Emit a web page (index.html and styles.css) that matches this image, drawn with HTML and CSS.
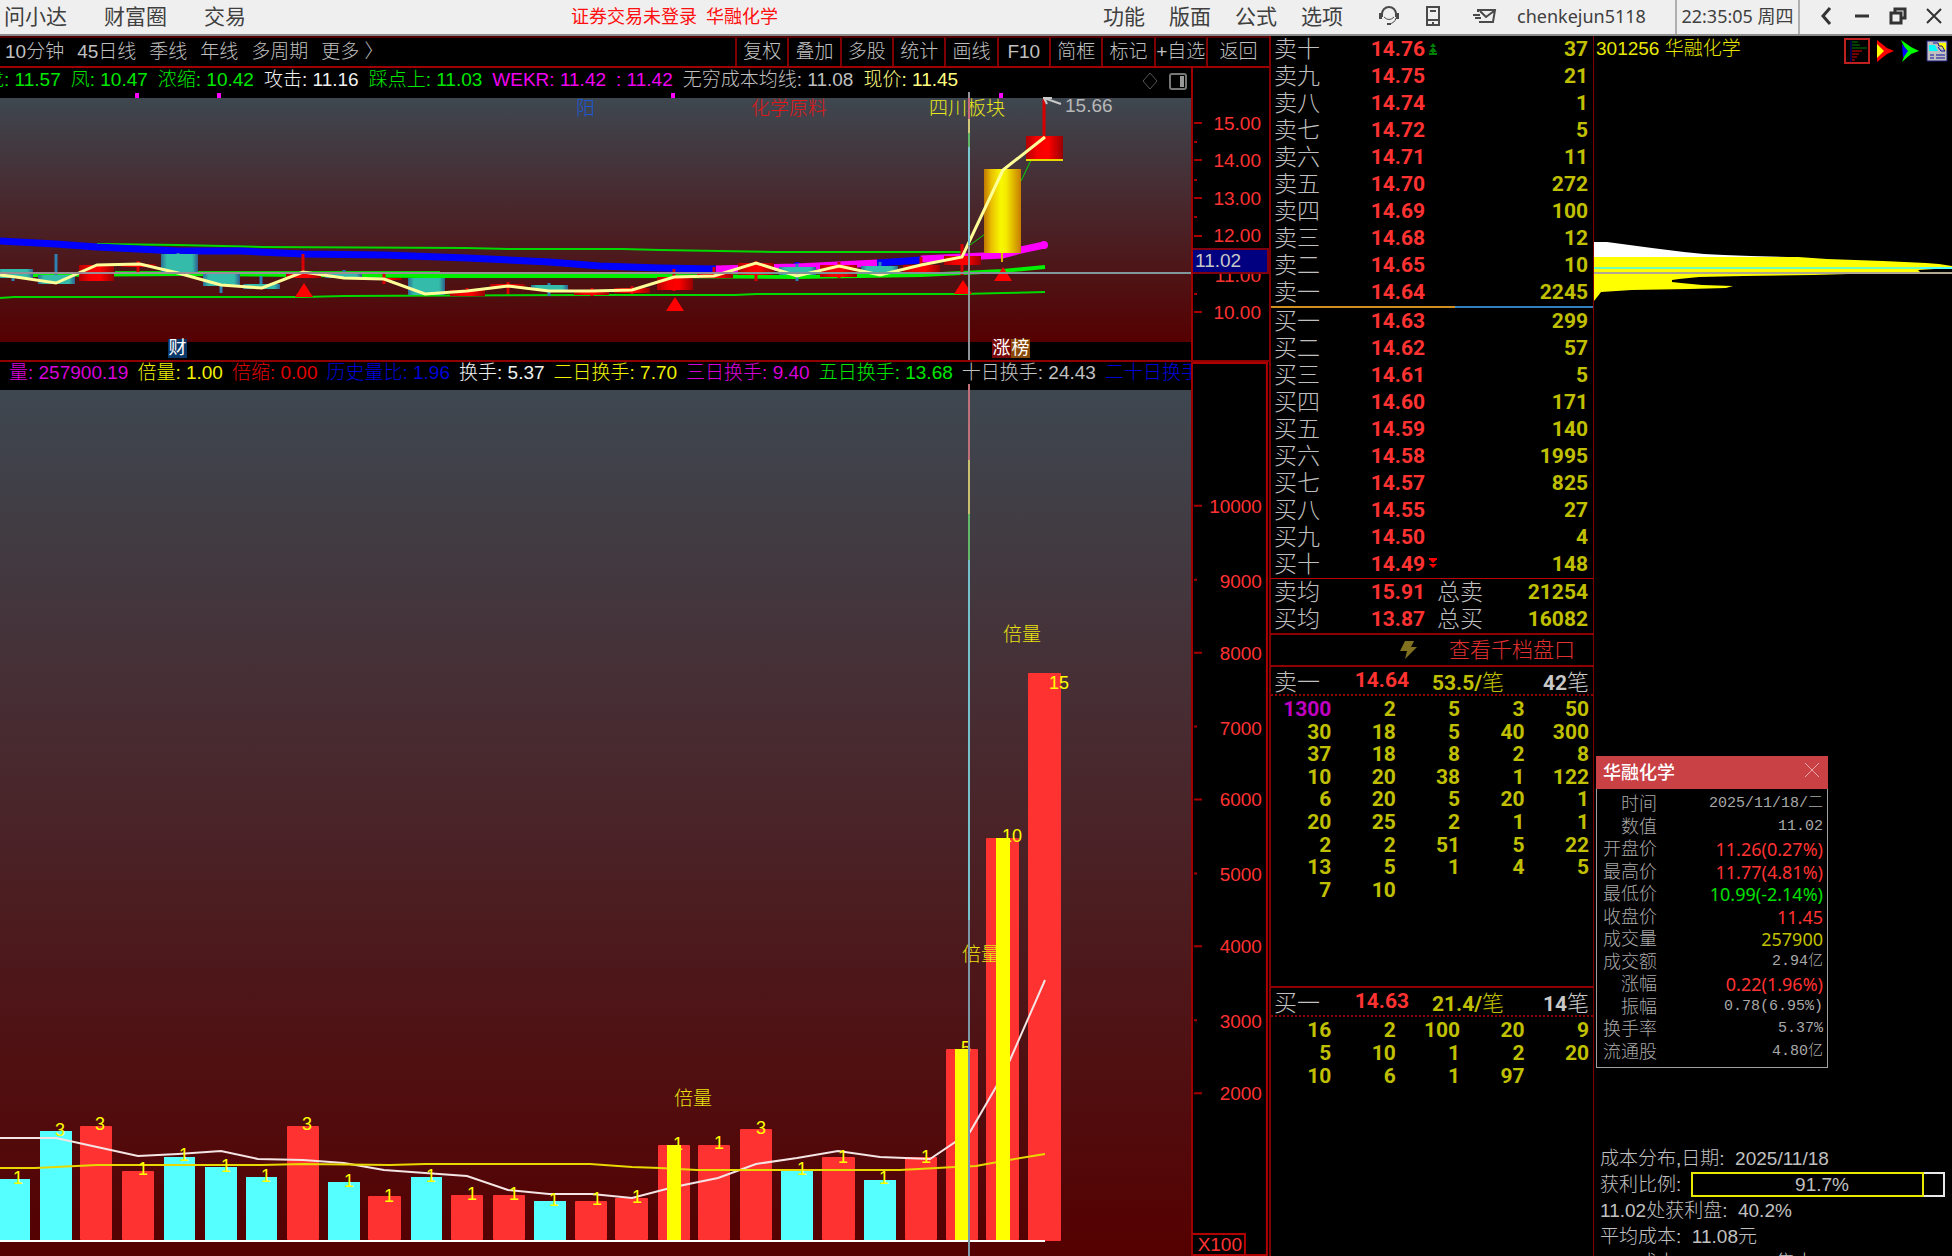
FILE: index.html
```html
<!DOCTYPE html>
<html lang="zh-CN">
<head>
<meta charset="utf-8">
<title>华融化学 301256</title>
<link rel="stylesheet" href="styles.css">
</head>
<body>
<header class="topbar">
  <nav class="menu menu-left">
    <button>问小达</button><button>财富圈</button><button>交易</button>
  </nav>
  <div class="login-state"><a href="#login">证券交易未登录</a><a href="#stock">华融化学</a></div>
  <div class="topbar-right">
    <nav class="menu menu-right">
      <button>功能</button><button>版面</button><button>公式</button><button>选项</button>
    </nav>
    <div class="tools">
      <button aria-label="客服"><svg width="22" height="20" viewBox="0 0 22 20"><path d="M4 11V8a7 7 0 0 1 14 0v3" fill="none" stroke="#4a4a4a" stroke-width="2"/><path d="M1 7h3v6H1zM18 7h3v6h-3z" fill="#4a4a4a"/><path d="M18 12q-1 5-7 6M6 11q5 5 10 0" fill="none" stroke="#4a4a4a" stroke-width="1"/><path d="M9 17h4v2H9z" fill="#4a4a4a"/></svg></button>
      <button aria-label="手机"><svg width="14" height="20" viewBox="0 0 14 20"><path d="M1 1h12v18H1zM4 5h6M1 14h12" fill="none" stroke="#4a4a4a" stroke-width="2"/><path d="M6 16h2v2H6z" fill="#4a4a4a"/></svg></button>
      <button class="tool-mail" aria-label="消息"><svg width="24" height="16" viewBox="0 0 24 16"><path d="M5 4V2h17l-2 12H6M7 3l6 6 8-6M0 7h7M2 10h6" fill="none" stroke="#4a4a4a" stroke-width="2"/></svg></button>
    </div>
    <span class="user">chenkejun5118</span>
    <time class="clock">22:35:05 周四</time>
    <div class="window-buttons">
      <button aria-label="后退"><svg width="12" height="18" viewBox="0 0 12 18"><path d="M10 1L3 9l7 8" fill="none" stroke="#333" stroke-width="3"/></svg></button>
      <button aria-label="最小化"><svg width="14" height="18" viewBox="0 0 14 18"><path d="M0 9h14" stroke="#333" stroke-width="3"/></svg></button>
      <button aria-label="还原"><svg width="18" height="18" viewBox="0 0 18 18"><path d="M6 6V2h10v9h-4M2 6h10v10H2z" fill="none" stroke="#333" stroke-width="3"/></svg></button>
      <button aria-label="关闭"><svg width="16" height="16" viewBox="0 0 16 16"><path d="M1 1l14 14M15 1L1 15" stroke="#333" stroke-width="2"/></svg></button>
    </div>
  </div>
</header>

<main class="workspace">
  <section class="charts">
    <div class="toolbar">
      <div class="periods">
        <button>10分钟</button><button>45日线</button><button>季线</button><button>年线</button><button>多周期</button><button>更多 〉</button>
      </div>
      <div class="actions">
        <button>复权</button><button>叠加</button><button>多股</button><button>统计</button><button>画线</button><button>F10</button><button>简框</button><button>标记</button><button>+自选</button><button>返回</button>
      </div>
    </div>

    <div class="price-row">
      <div class="pane">
        <div class="legend legend-price">
          <span class="green">龙: 11.57</span><span class="green">凤: 10.47</span><span class="green">浓缩: 10.42</span><span class="white">攻击: 11.16</span><span class="green">踩点上: 11.03</span><span class="magenta">WEKR: 11.42</span><span class="magenta">: 11.42</span><span class="grey">无穷成本均线: 11.08</span><span class="pale">现价: 11.45</span>
          <svg class="legend-icons" width="48" height="18" viewBox="0 0 48 18"><path d="M9 1l7 8-7 8-7-8z" fill="none" stroke="#555"/><rect x="29" y="2" width="16" height="15" rx="2" fill="none" stroke="#777" stroke-width="2"/><rect x="39" y="4" width="4" height="11" fill="#999"/></svg>
        </div>
        <svg class="price-plot" viewBox="0 98 1191 244" preserveAspectRatio="xMaxYMin meet">
          <defs>
            <linearGradient id="up"><stop offset="0" stop-color="#b00000"/><stop offset=".3" stop-color="#f40000"/><stop offset=".6" stop-color="#ff0000"/><stop offset="1" stop-color="#980000"/></linearGradient>
            <linearGradient id="down"><stop offset="0" stop-color="#2c6f96"/><stop offset=".16" stop-color="#35bbaa"/><stop offset=".84" stop-color="#35bbaa"/><stop offset="1" stop-color="#2f5f90"/></linearGradient>
            <linearGradient id="limit"><stop offset="0" stop-color="#c07800"/><stop offset=".2" stop-color="#eac000"/><stop offset=".45" stop-color="#f8f800"/><stop offset=".6" stop-color="#f4ec00"/><stop offset="1" stop-color="#c87c00"/></linearGradient>
          </defs>
          <g fill="#ff00ff"><path d="M135 93h4v5h-4zM217 93h4v5h-4zM671 93h4v5h-4zM999 93h4v5h-4z"/></g>
          <g fill="none" stroke="#00d800" stroke-width="2">
            <path d="M97 244L178 245 262 247 466 248 508 249 623 249 660 250 776 252 966 252"/>
            <path d="M0 298L14 297 303 297 344 296 600 295 735 295 756 294 962 294 1003 293 1045 292"/>
            <path d="M115 272H440"/>
            <path d="M970 245L985 234M1021 181L1032 158" stroke-width="1"/>
            <path d="M33 275L178 274 303 275 425 276 660 276 797 277 921 275 1003 271 1045 267" stroke="#00f000" stroke-width="4"/>
          </g>
          <g fill="none" stroke-width="7" stroke-linejoin="round">
            <path d="M0 241L56 244 97 247 178 251 240 251 303 254 384 255 467 258 549 262 600 266 660 268 716 269M877 263L921 260" stroke="#0000ff"/>
            <circle cx="797" cy="266" r="4" fill="#0000ff"/>
            <path d="M716 269L797 267 877 263M921 259L962 257 1003 255 1021 250 1044 245" stroke="#ff00ff"/>
            <circle cx="1044" cy="245" r="4" fill="#ff00ff"/>
          </g>
          <g stroke="#2f7fb0" stroke-width="3">
            <path d="M13 276v5M56 254v22M178 253v5M221 286v7M261 276v13M344 270v5M549 283v13M797 264v17M880 262v8"/>
          </g>
          <g stroke="#d80000" stroke-width="3">
            <path d="M138 261v11M303 254v22M384 274v10M467 288v6M508 282v12M592 288v8M632 286v8M674 269v22M714 267v9M756 261v20M839 262v16M921 257v12M962 244v31M1044 99v38"/>
          </g>
          <path d="M1002 253v9" stroke="#e0b000" stroke-width="2"/>
          <g fill="url(#down)">
            <rect x="-4" y="269" width="37" height="9"/><rect x="38" y="275" width="37" height="9"/><rect x="161" y="254" width="37" height="18"/><rect x="203" y="273" width="37" height="13"/><rect x="243" y="284" width="37" height="5"/><rect x="325" y="273" width="37" height="5"/><rect x="408" y="278" width="37" height="17"/><rect x="531" y="285" width="37" height="5"/><rect x="779" y="267" width="37" height="8"/><rect x="861" y="266" width="37" height="7"/>
          </g>
          <g fill="url(#up)">
            <rect x="79" y="265" width="35" height="16"/><rect x="121" y="264" width="35" height="3"/><rect x="286" y="273" width="35" height="5"/><rect x="367" y="278" width="35" height="2"/><rect x="450" y="290" width="35" height="6"/><rect x="490" y="284" width="35" height="4"/><rect x="574" y="291" width="35" height="4"/><rect x="614" y="288" width="36" height="5"/><rect x="657" y="277" width="36" height="13"/><rect x="697" y="274" width="36" height="4"/><rect x="738" y="263" width="36" height="12"/><rect x="820" y="265" width="37" height="12"/><rect x="903" y="265" width="37" height="7"/><rect x="944" y="256" width="37" height="9"/><rect x="1026" y="136" width="37" height="24"/>
          </g>
          <path d="M1026 160h37" stroke="#e8d800" stroke-width="2"/>
          <rect x="984" y="169" width="37" height="84" fill="url(#limit)"/>
          <path d="M0 275L16 277 56 283 97 265 140 264 178 273 221 285 262 288 303 272 344 278 384 279 425 294 467 291 508 286 549 291 592 291 632 290 674 277 714 276 756 263 797 276 839 266 880 275 921 265 962 257 1003 170 1045 137" fill="none" stroke="#ffff98" stroke-width="3"/>
          <path d="M295 297L304 283 313 297zM666 311L675 297 684 311zM954 294L963 280 972 294zM994 281L1003 267 1012 281z" fill="#ff0000"/>
          <path d="M0 273H1191" stroke="#9a8f96" stroke-width="2"/>
          <path d="M750 273H1191" stroke="#80989c" stroke-width="2"/>
          <g font-size="19">
            <text x="576" y="115" fill="#1c58d8">阳</text>
            <text x="751" y="115" fill="#e01818">化学原料</text>
            <text x="929" y="115" fill="#e8e818">四川板块</text>
            <text x="1065" y="112" fill="#b8b8b8">15.66</text>
          </g>
          <path d="M1044 98L1061 104M1043 98h9M1044 98l3 6" fill="none" stroke="#c8c8c8" stroke-width="2"/>
          <g stroke-width="2"><path d="M969 92v268" stroke="#909498"/><path d="M969 98v21" stroke="#c86878"/><path d="M969 119v14" stroke="#d0c878"/><path d="M969 133v14" stroke="#60b868"/><path d="M969 147v98" stroke="#7ac8d0"/></g>
        </svg>
        <div class="event-strip">
          <button class="event event-report">财</button>
          <button class="event event-rise">涨</button><button class="event event-rank">榜</button>
        </div>
      </div>
      <svg class="axis" width="76" viewBox="1193 68 76 292" preserveAspectRatio="xMinYMin meet">
        <path d="M1194 123h8M1194 160h8M1194 198h8M1194 236h8M1194 273h8M1194 312h8M1194 142h3M1194 180h3M1194 217h3M1194 294h3" stroke="#a80000" stroke-width="2"/>
        <g font-size="19" fill="#ff3232" text-anchor="end">
          <text x="1261" y="130">15.00</text><text x="1261" y="167">14.00</text><text x="1261" y="205">13.00</text><text x="1261" y="242">12.00</text><text x="1261" y="282">11.00</text><text x="1261" y="319">10.00</text>
        </g>
        <rect x="1192" y="249" width="76" height="24" fill="#000080" stroke="#800010" stroke-width="2"/>
        <text x="1195" y="267" font-size="19" fill="#c8c8c8">11.02</text>
      </svg>
    </div>

    <div class="volume-row">
      <div class="pane">
        <div class="legend legend-volume">
          <span class="violet">量: 257900.19</span><span class="yellow">倍量: 1.00</span><span class="red">倍缩: 0.00</span><span class="blue">历史量比: 1.96</span><span class="white">换手: 5.37</span><span class="yellow">二日换手: 7.70</span><span class="violet">三日换手: 9.40</span><span class="green">五日换手: 13.68</span><span class="grey">十日换手: 24.43</span><span class="blue">二十日换手: 31.26</span>
        </div>
        <svg class="volume-plot" viewBox="0 390 1191 866" preserveAspectRatio="xMaxYMax meet">
          <g fill="#55ffff">
            <rect x="-2" y="1179" width="32" height="62"/><rect x="40" y="1131" width="32" height="110"/><rect x="164" y="1157" width="31" height="84"/><rect x="205" y="1167" width="32" height="74"/><rect x="246" y="1177" width="31" height="64"/><rect x="328" y="1182" width="32" height="59"/><rect x="411" y="1177" width="31" height="64"/><rect x="534" y="1201" width="32" height="40"/><rect x="781" y="1171" width="32" height="70"/><rect x="864" y="1180" width="32" height="61"/>
          </g>
          <g fill="#ff3232">
            <rect x="80" y="1126" width="32" height="114" rx="1"/><rect x="122" y="1171" width="32" height="69" rx="1"/><rect x="287" y="1126" width="32" height="114" rx="1"/><rect x="368" y="1196" width="33" height="44" rx="1"/><rect x="451" y="1195" width="32" height="45" rx="1"/><rect x="493" y="1195" width="32" height="45" rx="1"/><rect x="575" y="1201" width="32" height="39" rx="1"/><rect x="615" y="1198" width="33" height="42" rx="1"/><rect x="658" y="1145" width="32" height="95" rx="1"/><rect x="698" y="1145" width="32" height="95" rx="1"/><rect x="740" y="1129" width="32" height="111" rx="1"/><rect x="822" y="1157" width="33" height="83" rx="1"/><rect x="905" y="1157" width="32" height="83" rx="1"/><rect x="946" y="1049" width="32" height="191" rx="1"/><rect x="986" y="838" width="33" height="402" rx="1"/><rect x="1028" y="673" width="33" height="568" rx="1"/>
          </g>
          <path d="M0 1138L56 1138 97 1147 138 1156 178 1154 221 1151 258 1159 303 1160 344 1163 384 1170 425 1173 467 1176 508 1190 549 1194 592 1194 632 1198 674 1187 718 1178 756 1164 797 1158 838 1151 880 1157 930 1159 970 1132 996 1087 1010 1060 1045 980" fill="none" stroke="#f4e4e4" stroke-width="2"/>
          <path d="M0 1168L35 1168 97 1165 262 1165 303 1164 390 1165 425 1164 590 1164 632 1167 660 1168 697 1170 900 1170 955 1167 976 1166 1003 1161 1045 1154" fill="none" stroke="#e8d800" stroke-width="2"/>
          <g font-size="18" fill="#ffff00">
            <text x="13" y="1184">1</text><text x="55" y="1136">3</text><text x="95" y="1130">3</text><text x="138" y="1175">1</text><text x="179" y="1161">1</text><text x="221" y="1172">1</text><text x="261" y="1182">1</text><text x="302" y="1130">3</text><text x="344" y="1187">1</text><text x="384" y="1202">1</text><text x="426" y="1182">1</text><text x="467" y="1200">1</text><text x="509" y="1200">1</text><text x="549" y="1206">1</text><text x="592" y="1205">1</text><text x="632" y="1203">1</text><text x="673" y="1150">1</text><text x="714" y="1149">1</text><text x="756" y="1134">3</text><text x="797" y="1175">1</text><text x="838" y="1163">1</text><text x="879" y="1184">1</text><text x="921" y="1163">1</text><text x="961" y="1054">5</text><text x="1002" y="842">10</text><text x="1049" y="689">15</text>
          </g>
          <g font-size="19" fill="#e8e010">
            <text x="674" y="1105">倍量</text><text x="962" y="961">倍量</text><text x="1003" y="641">倍量</text>
          </g>
          <path d="M667 1145h14v95h-14zM955 1049h14v191h-14zM996 838h14v402h-14z" fill="#ffff00"/>
          <path d="M0 1241H1045" stroke="#ffffff" stroke-width="2"/>
          <g stroke-width="2"><path d="M969 384v76" stroke="#c07078"/><path d="M969 460v54" stroke="#c8c070"/><path d="M969 514v46" stroke="#60b868"/><path d="M969 560v360" stroke="#74c0cc"/><path d="M969 920v336" stroke="#7c98a8"/></g>
        </svg>
      </div>
      <svg class="axis axis-volume" width="76" viewBox="1193 361 76 895" preserveAspectRatio="xMinYMax meet">
        <path d="M1194 505h8M1194 652h8M1194 799h8M1194 946h8M1194 1093h8M1194 579h3M1194 726h3M1194 873h3M1194 1020h3" stroke="#a80000" stroke-width="2"/>
        <path d="M1193 362h74v894M1193 1234h52v22M1193 1255h74" fill="none" stroke="#b00000" stroke-width="2"/>
        <g font-size="19" fill="#ff3232" text-anchor="end">
          <text x="1262" y="512">10000</text><text x="1262" y="587">9000</text><text x="1262" y="659">8000</text><text x="1262" y="734">7000</text><text x="1262" y="806">6000</text><text x="1262" y="881">5000</text><text x="1262" y="953">4000</text><text x="1262" y="1028">3000</text><text x="1262" y="1100">2000</text><text x="1242" y="1251">X100</text>
        </g>
      </svg>
    </div>
  </section>

  <section class="quotes">
    <table class="book">
      <tr><th>卖十</th><td class="price">14.76<svg class="book-mark" width="8" height="12" viewBox="0 0 8 12"><path d="M4 0l3 4H1zM4 4l4 5H0zM3 9h2v1h3v2H0v-2h3z" fill="#008000"/></svg></td><td>37</td></tr>
      <tr><th>卖九</th><td class="price">14.75</td><td>21</td></tr>
      <tr><th>卖八</th><td class="price">14.74</td><td>1</td></tr>
      <tr><th>卖七</th><td class="price">14.72</td><td>5</td></tr>
      <tr><th>卖六</th><td class="price">14.71</td><td>11</td></tr>
      <tr><th>卖五</th><td class="price">14.70</td><td>272</td></tr>
      <tr><th>卖四</th><td class="price">14.69</td><td>100</td></tr>
      <tr><th>卖三</th><td class="price">14.68</td><td>12</td></tr>
      <tr><th>卖二</th><td class="price">14.65</td><td>10</td></tr>
      <tr><th>卖一</th><td class="price">14.64</td><td>2245</td></tr>
    </table>
    <div class="balance"></div>
    <table class="book">
      <tr><th>买一</th><td class="price">14.63</td><td>299</td></tr>
      <tr><th>买二</th><td class="price">14.62</td><td>57</td></tr>
      <tr><th>买三</th><td class="price">14.61</td><td>5</td></tr>
      <tr><th>买四</th><td class="price">14.60</td><td>171</td></tr>
      <tr><th>买五</th><td class="price">14.59</td><td>140</td></tr>
      <tr><th>买六</th><td class="price">14.58</td><td>1995</td></tr>
      <tr><th>买七</th><td class="price">14.57</td><td>825</td></tr>
      <tr><th>买八</th><td class="price">14.55</td><td>27</td></tr>
      <tr><th>买九</th><td class="price">14.50</td><td>4</td></tr>
      <tr><th>买十</th><td class="price">14.49<svg class="book-mark" width="8" height="10" viewBox="0 0 8 10"><path d="M4 10l4-4H0zM4 5l3-3H1zM0 0h8v2H0z" fill="#ff0000"/></svg></td><td>148</td></tr>
    </table>
    <table class="book averages">
      <tr><th>卖均</th><td class="price">15.91</td><th class="total">总卖</th><td>21254</td></tr>
      <tr><th>买均</th><td class="price">13.87</td><th class="total">总买</th><td>16082</td></tr>
    </table>
    <button class="depth"><svg width="18" height="18" viewBox="0 0 18 18"><path d="M6 0h9l-3 6h6L6 18l2-8H1z" fill="#807020"/></svg>查看千档盘口</button>
    <div class="queue queue-sell">
      <div class="queue-head"><span class="side">卖一</span><span class="price">14.64</span><span class="avg">53.5/<i>笔</i></span><span class="count">42<i>笔</i></span></div>
      <table class="orders">
        <tr><td class="big">1300</td><td>2</td><td>5</td><td>3</td><td>50</td></tr>
        <tr><td>30</td><td>18</td><td>5</td><td>40</td><td>300</td></tr>
        <tr><td>37</td><td>18</td><td>8</td><td>2</td><td>8</td></tr>
        <tr><td>10</td><td>20</td><td>38</td><td>1</td><td>122</td></tr>
        <tr><td>6</td><td>20</td><td>5</td><td>20</td><td>1</td></tr>
        <tr><td>20</td><td>25</td><td>2</td><td>1</td><td>1</td></tr>
        <tr><td>2</td><td>2</td><td>51</td><td>5</td><td>22</td></tr>
        <tr><td>13</td><td>5</td><td>1</td><td>4</td><td>5</td></tr>
        <tr><td>7</td><td>10</td><td></td><td></td><td></td></tr>
      </table>
    </div>
    <div class="queue queue-buy">
      <div class="queue-head"><span class="side">买一</span><span class="price">14.63</span><span class="avg">21.4/<i>笔</i></span><span class="count">14<i>笔</i></span></div>
      <table class="orders">
        <tr><td>16</td><td>2</td><td>100</td><td>20</td><td>9</td></tr>
        <tr><td>5</td><td>10</td><td>1</td><td>2</td><td>20</td></tr>
        <tr><td>10</td><td>6</td><td>1</td><td>97</td><td></td></tr>
      </table>
    </div>
  </section>

  <section class="cost">
    <div class="cost-head">
      <h1>301256 华融化学</h1>
      <div class="cost-tools">
        <button aria-label="成本分布"><svg width="26" height="26" viewBox="0 0 26 26"><rect x="1" y="1" width="24" height="24" fill="none" stroke="#c02020" stroke-width="2"/><path d="M7 3v21" stroke="#000090" stroke-width="1"/><path d="M8 4h6M8 7h8M8 10h15" stroke="#008000" stroke-width="1"/><path d="M8 13h10M8 16h7M8 19h5M8 22h3" stroke="#e00000" stroke-width="1"/></svg></button>
        <button aria-label="火焰山"><svg width="17" height="22" viewBox="0 0 17 22"><path d="M0 0l10 8 7 3-7 3L0 22z" fill="#ff0000"/><path d="M0 4l7 7-7 7z" fill="#ffff00"/></svg></button>
        <button aria-label="活跃度"><svg width="18" height="22" viewBox="0 0 18 22"><path d="M0 0l10 7 8 4-8 3-9 8 4-11z" fill="#00ff00"/><path d="M1 4l6 7-5 7z" fill="#0000ff"/></svg></button>
        <button aria-label="设置"><svg width="22" height="22" viewBox="0 0 22 22"><path d="M1 1h20v20H1z" fill="#c0c0c0" stroke="#202080" stroke-width="1"/><path d="M3 5h6l3 6H3z" fill="#00ffff"/><path d="M11 3h9v8l-7-5z" fill="#ffff00"/><path d="M7 3h5l1 3h3l3 5h-4l-3-4M4 15h4M4 18h4M10 15h9M10 18h9" fill="none" stroke="#1010a0" stroke-width="1"/></svg></button>
      </div>
    </div>
    <div class="cost-plot">
      <svg width="100%" height="260" viewBox="1594 66 358 260" preserveAspectRatio="none">
        <path d="M1594 242H1607L1622 244 1637 246 1652 248 1668 250 1684 252 1704 254 1724 255 1751 256 1788 257V258H1594z" fill="#ffffff"/>
        <path d="M1594 257H1798L1827 259 1883 261 1926 263 1939 264 1952 266V268L1918 270 1920 272 1813 275 1744 276 1699 277 1679 279 1672 280V282L1681 283 1702 285 1733 286 1726 288 1690 289 1632 290 1601 292 1598 296 1594 301z" fill="#ffff00"/>
        <path d="M1594 268H1952" stroke="#70ffb0" stroke-width="2"/>
        <path d="M1920 268H1952" stroke="#50ffff" stroke-width="2"/>
        <path d="M1594 273H1952" stroke="#b0a890" stroke-width="2"/>
      </svg>
    </div>
    <div class="cost-info">
      <p>成本分布,日期:&nbsp; 2025/11/18</p>
      <p class="profit">获利比例:<span class="profit-bar"><span class="profit-fill" style="width:91.7%"></span><b>91.7%</b></span></p>
      <p>11.02处获利盘:&nbsp; 40.2%</p>
      <p>平均成本:&nbsp; 11.08元</p>
      <p>90%成本10.50-11.58集中9.4%</p>
    </div>

    <aside class="popup">
      <header><h2>华融化学</h2><button aria-label="关闭"><svg width="16" height="16" viewBox="0 0 16 16"><path d="M1 1l14 14M15 1L1 15" stroke="#e8a8aa" stroke-width="1"/></svg></button></header>
      <table>
        <tr><th>时间</th><td>2025/11/18/二</td></tr>
        <tr><th>数值</th><td>11.02</td></tr>
        <tr><th>开盘价</th><td class="up">11.26(0.27%)</td></tr>
        <tr><th>最高价</th><td class="up">11.77(4.81%)</td></tr>
        <tr><th>最低价</th><td class="down">10.99(-2.14%)</td></tr>
        <tr><th>收盘价</th><td class="up">11.45</td></tr>
        <tr><th>成交量</th><td class="vol">257900</td></tr>
        <tr><th>成交额</th><td>2.94亿</td></tr>
        <tr><th>涨幅</th><td class="up">0.22(1.96%)</td></tr>
        <tr><th>振幅</th><td>0.78(6.95%)</td></tr>
        <tr><th>换手率</th><td>5.37%</td></tr>
        <tr><th>流通股</th><td>4.80亿</td></tr>
      </table>
    </aside>
  </section>
</main>
</body>
</html>
```
FILE: styles.css
```css
* { box-sizing: border-box; margin: 0; padding: 0; }

body {
  display: flex;
  flex-direction: column;
  height: 100vh;
  overflow: hidden;
  background: #000;
  color: #c0c0c0;
  font: 19px/26px "Liberation Sans", "Noto Sans CJK SC", sans-serif;
  font-weight: 300;
}

button {
  border: 0;
  background: none;
  color: inherit;
  font: inherit;
  white-space: nowrap;
}
svg { display: block; }
i { font-style: normal; }
table { border-collapse: collapse; }
th { font-weight: inherit; }

/* top bar */
.topbar {
  flex: none;
  display: flex;
  justify-content: space-between;
  height: 36px;
  padding-left: 4px;
  border-bottom: 2px solid #8c8c8c;
  background: #efefef;
  color: #404040;
  font-weight: 400;
  line-height: 34px;
  white-space: nowrap;
}
.menu { display: flex; font-size: 21px; line-height: 32px; }
.menu-left { gap: 37px; }
.menu-right { gap: 24px; }
.login-state { display: flex; gap: 9px; font-size: 18px; }
.login-state a { color: #ff1010; text-decoration: none; }
.topbar-right { display: flex; }
.tools { display: flex; width: 148px; margin: 0 2px 0 24px; }
.tools button, .window-buttons button { display: flex; flex: 1; align-items: center; justify-content: center; padding-bottom: 2px; }
.tools .tool-mail { flex: none; width: 60px; }
.user { width: 158px; font-family: "Noto Sans", sans-serif; font-size: 18px; line-height: 32px; }
.clock {
  width: 125px;
  border-left: 2px solid #b0b0b0;
  border-right: 2px solid #b0b0b0;
  font-family: "Noto Sans", "Noto Sans CJK SC", sans-serif;
  font-size: 18px;
  line-height: 32px;
  text-align: center;
}
.window-buttons { display: flex; width: 152px; padding-left: 8px; }

/* workspace */
.workspace { flex: 1; display: flex; min-height: 0; }
.charts { flex: 1; display: flex; flex-direction: column; min-width: 0; }
.toolbar {
  flex: none;
  display: flex;
  justify-content: space-between;
  height: 32px;
  border-top: 2px solid #500000;
  border-bottom: 2px solid #a00000;
  line-height: 26px;
}
.periods { display: flex; gap: 13px; padding-left: 5px; }
.actions { display: grid; grid-template-columns: repeat(9, 1fr) 63px; width: 534px; }
.actions button { border-left: 2px solid #800000; }

.price-row { flex: none; display: flex; }
.volume-row { flex: 1; display: flex; min-height: 0; border-top: 2px solid #900000; }
.pane { flex: 1; display: flex; flex-direction: column; min-width: 0; border-right: 2px solid #a00000; }
.axis { flex: none; height: 292px; }
.axis-volume { height: 100%; }

.legend { flex: none; display: flex; height: 30px; overflow: hidden; white-space: nowrap; }
.legend span { flex: none; }
.legend-price { gap: 10px; margin-left: -15px; line-height: 24px; }
.legend-volume { gap: 9px; height: 28px; padding-left: 9px; line-height: 22px; }
.legend-icons { margin: 4px 2px 0 auto; }
.green { color: #00e800; }
.white { color: #f0f0f0; }
.magenta { color: #f000f0; }
.violet { color: #d800d8; }
.grey { color: #c0c0c0; }
.pale { color: #ffff80; }
.yellow { color: #f0f000; }
.red { color: #e00000; }
.blue { color: #0000d8; }

.price-plot, .volume-plot { width: 100%; overflow: visible; background: linear-gradient(#3e4750, #550000); }
.price-plot { height: 244px; }
.volume-plot { flex: 1; min-height: 0; }
.event-strip { position: relative; height: 18px; }
.event { position: absolute; top: -3px; width: 19px; height: 19px; color: #fff; font-size: 18px; font-weight: 400; line-height: 19px; }
.event-report { left: 168px; background: #0a3868; }
.event-rise { right: 180px; background: #780808; }
.event-rank { right: 161px; background: #884808; }

/* order book */
.quotes {
  flex: none;
  display: flex;
  flex-direction: column;
  width: 325px;
  border-left: 2px solid #800000;
  border-right: 1px solid #800000;
}
.book { width: 100%; table-layout: fixed; line-height: 27px; }
.book tr { height: 27px; }
.book th { width: 60px; padding-left: 3px; font-size: 23px; text-align: left; white-space: nowrap; }
.book td, .orders td, .queue-head { color: #c0c000; font-family: Roboto, "Noto Sans CJK SC", sans-serif; font-size: 21px; font-weight: 700; text-align: right; }
.book td { padding-right: 5px; }
.book td.price { position: relative; width: 94px; padding: 0; color: #ff3232; }
.book-mark { position: absolute; left: 98px; top: 7px; }
.balance { flex: none; height: 2px; background: linear-gradient(90deg, #d09020 57%, #3080c0 57%); }
.averages { border-top: 1px solid #c00000; border-bottom: 2px solid #900000; }
.book th.total { width: 60px; padding-left: 12px; }
.depth {
  flex: none;
  display: flex;
  align-items: center;
  justify-content: flex-end;
  gap: 32px;
  height: 30px;
  padding-right: 18px;
  color: #e03030;
  font-size: 21px;
}
.queue { border-top: 2px solid #900000; }
.queue-sell { height: 321px; }
.queue-head {
  display: grid;
  grid-template-columns: 60px 75px 95px 1fr;
  height: 29px;
  margin-bottom: 2px;
  padding: 0 4px 0 3px;
  border-bottom: 2px dotted #900000;
  line-height: 27px;
}
.queue-head .side, .queue-head i { font-family: "Noto Sans CJK SC", sans-serif; font-size: 22px; font-weight: 300; line-height: 26px; }
.queue-head .side { color: #c0c0c0; font-size: 23px; text-align: left; }
.queue-head .price { color: #ff3232; }
.queue-head .count { color: #c8c8c8; }
.orders { width: 100%; height: 203px; table-layout: fixed; line-height: 22px; }
.orders td { padding-right: 4px; }
.queue-buy .orders { height: 68px; }
.orders .big { color: #c000c0; }

/* cost distribution */
.cost { position: relative; flex: none; display: flex; flex-direction: column; width: 358px; }
.cost-head { display: flex; justify-content: space-between; height: 30px; padding: 0 4px 0 2px; }
.cost-head h1 { color: #e8e800; font-size: 19px; font-weight: 300; line-height: 25px; }
.cost-tools { display: flex; align-items: center; gap: 7px; }
.cost-plot { flex: 1; min-height: 0; }
.cost-info { flex: none; height: 110px; padding: 0 7px 0 6px; overflow: hidden; white-space: nowrap; }
.profit { display: flex; justify-content: space-between; }
.profit-bar { position: relative; width: 254px; height: 25px; padding-left: 8px; box-shadow: inset 0 0 0 2px #e8e8e8; text-align: center; line-height: 25px; }
.profit-bar b { font-weight: 300; }
.profit-fill { position: absolute; top: 0; bottom: 0; left: 0; border: 2px solid #e8e800; }

/* floating data window */
.popup { position: absolute; top: 720px; left: 2px; width: 232px; border: 1px solid #a0a0a0; background: #000; font-size: 18px; }
.popup header { display: flex; justify-content: space-between; height: 33px; margin: -1px -1px 4px; padding: 0 8px 0 7px; background: #c94045; color: #fff; line-height: 35px; }
.popup h2 { font-size: 18px; font-weight: 500; }
.popup header button { display: flex; padding-top: 6px; }
.popup table { width: 100%; height: 270px; margin-bottom: 4px; line-height: 22px; }
.popup th { width: 60px; color: #a8a8a8; text-align: right; }
.popup td { padding-right: 4px; color: #a8a8a8; font-family: "Liberation Mono", "Noto Sans CJK SC", monospace; font-size: 15px; text-align: right; }
.popup td.up, .popup td.down, .popup td.vol { font-family: "Noto Sans", sans-serif; font-size: 18px; font-weight: 400; }
.popup td.up { color: #ff3232; }
.popup td.down { color: #00e000; }
.popup td.vol { color: #c0c000; }
```
